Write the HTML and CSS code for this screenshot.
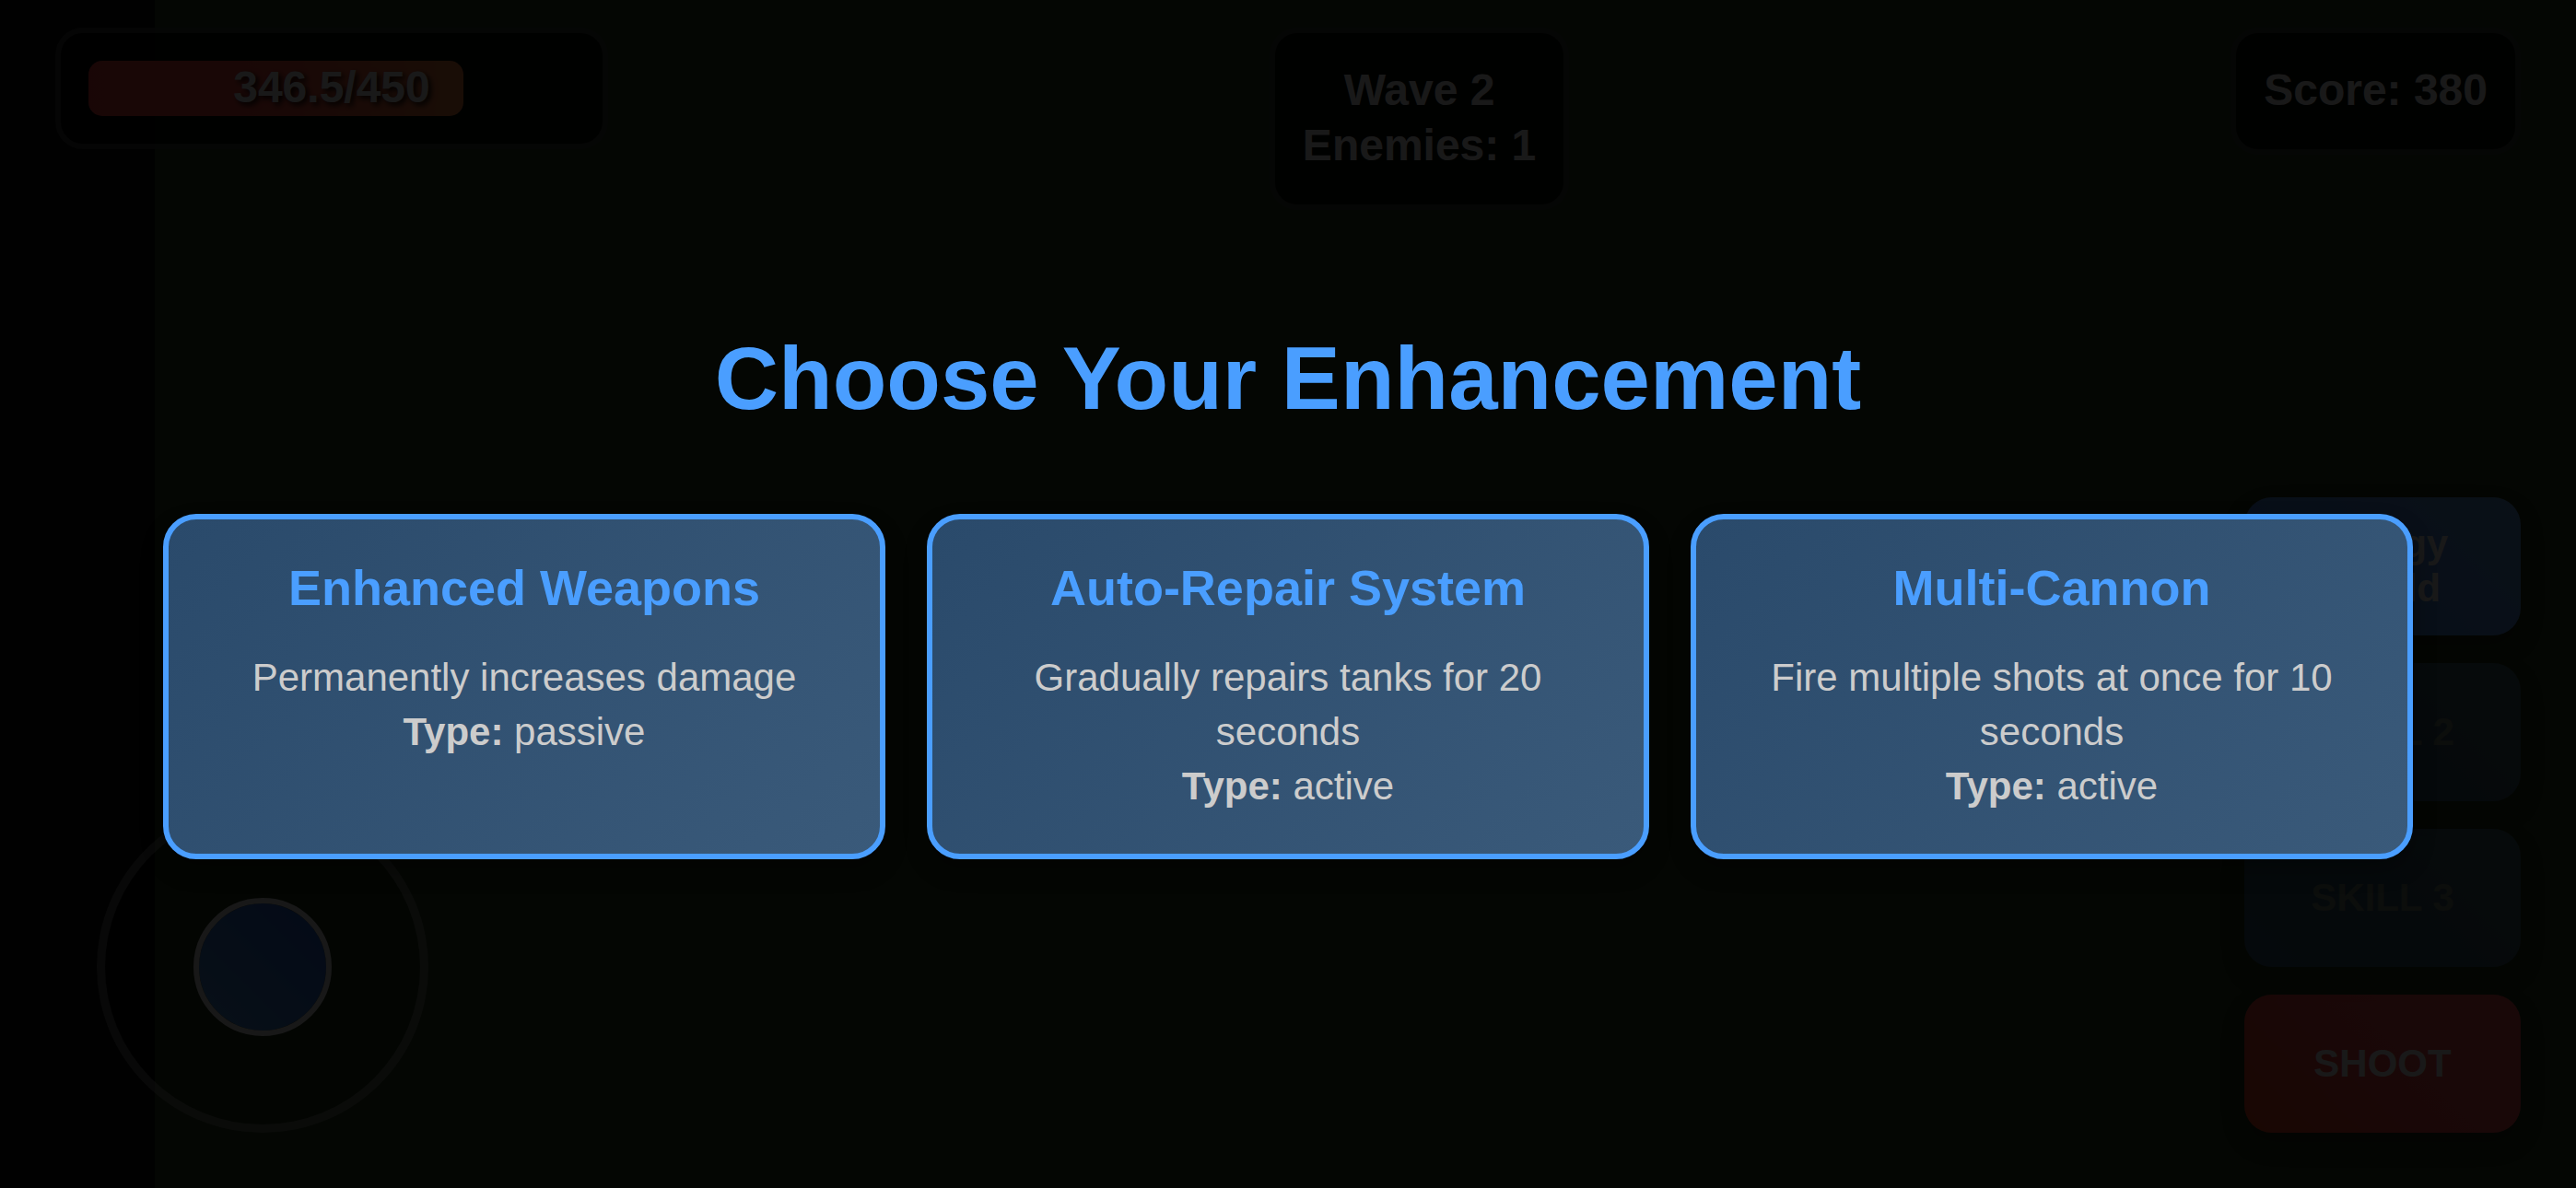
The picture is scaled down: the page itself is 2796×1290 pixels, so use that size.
FILE: index.html
```html
<!DOCTYPE html>
<html lang="en">
<head>
  <meta charset="utf-8">
  <meta name="viewport" content="width=device-width, initial-scale=1">
  <title>Choose Your Enhancement</title>
  <link rel="stylesheet" href="styles.css">
</head>
<body>
  <main class="game">
    <header class="hud">
      <div class="health">
        <div class="health-track">
          <div class="health-fill" style="width: 77%"></div>
          <span class="health-text">346.5/450</span>
        </div>
      </div>
      <div class="hud-box">
        <div>Wave 2</div>
        <div>Enemies: 1</div>
      </div>
      <div class="hud-box">Score: 380</div>
    </header>

    <div class="controls">
      <div class="joystick">
        <div class="joystick-knob"></div>
      </div>
      <div class="actions">
        <button class="action skill" type="button">Energy Shield</button>
        <button class="action skill" type="button" disabled>SKILL 2</button>
        <button class="action skill" type="button" disabled>SKILL 3</button>
        <button class="action shoot" type="button">SHOOT</button>
      </div>
    </div>

    <section class="overlay">
      <h1 class="overlay-title">Choose Your Enhancement</h1>
      <div class="cards">
        <button class="card" type="button">
          <span class="card-title">Enhanced Weapons</span>
          <span class="card-text">Permanently increases damage</span>
          <span class="card-text"><strong>Type:</strong> passive</span>
        </button>
        <button class="card" type="button">
          <span class="card-title">Auto-Repair System</span>
          <span class="card-text">Gradually repairs tanks for 20 seconds</span>
          <span class="card-text"><strong>Type:</strong> active</span>
        </button>
        <button class="card" type="button">
          <span class="card-title">Multi-Cannon</span>
          <span class="card-text">Fire multiple shots at once for 10 seconds</span>
          <span class="card-text"><strong>Type:</strong> active</span>
        </button>
      </div>
    </section>
  </main>
</body>
</html>
```
FILE: styles.css
```css
* {
  box-sizing: border-box;
}

body {
  margin: 0;
  background: #0a0a0a;
  color: #fff;
  font-family: "Liberation Sans", Arial, sans-serif;
}

button {
  margin: 0;
  font-family: inherit;
  color: inherit;
  cursor: pointer;
}

.game {
  position: relative;
  display: flex;
  flex-direction: column;
  justify-content: space-between;
  min-height: 100vh;
  background: linear-gradient(90deg, #0a0a0a 168px, #283c1e 168px);
}

/* Status bar */

.hud {
  display: flex;
  justify-content: space-between;
  align-items: flex-start;
  padding: 30px 60px 0;
  font-size: 48px;
  font-weight: bold;
  line-height: 60px;
}

.health,
.hud-box {
  background: rgba(0, 0, 0, 0.8);
  border: 6px solid rgba(255, 255, 255, 0.2);
  border-radius: 30px;
}

.health {
  width: 600px;
  padding: 30px;
}

.health-track {
  display: grid;
  height: 60px;
}

.health-fill,
.health-text {
  grid-area: 1 / 1;
}

.health-fill {
  border-radius: 15px;
  background: linear-gradient(90deg, #ff4444, #ff5040 50%, #ff8844);
}

.health-text {
  line-height: 58px;
  text-align: center;
  text-shadow: 3px 3px 6px #000;
}

.hud-box {
  padding: 32px 30px 34px;
  text-align: center;
}

/* Touch controls */

.controls {
  display: flex;
  justify-content: space-between;
  align-items: flex-end;
  padding: 0 60px 60px 105px;
}

.joystick {
  display: grid;
  place-items: center;
  width: 360px;
  height: 360px;
  border: 9px solid rgba(255, 255, 255, 0.3);
  border-radius: 50%;
  background: rgba(0, 0, 0, 0.1);
  background-clip: padding-box;
}

.joystick-knob {
  width: 150px;
  height: 150px;
  border: 6px solid #eee;
  border-radius: 50%;
  background: linear-gradient(45deg, #4e9eee, #2a66e6);
  background-clip: padding-box;
}

.actions {
  display: flex;
  flex-direction: column;
  gap: 30px;
}

.action {
  width: 300px;
  height: 150px;
  padding: 0 60px;
  border: 0;
  border-radius: 30px;
  font-size: 42px;
  font-weight: bold;
  line-height: 48px;
  box-shadow: 0 12px 24px rgba(0, 0, 0, 0.3);
}

.skill {
  background: linear-gradient(45deg, #4a8aff, #64a5e6);
}

.skill:disabled {
  color: #fff;
  opacity: 0.4;
}

.shoot {
  background: linear-gradient(45deg, #ff4422, #ff4e4e 50%, #ff5555);
}

/* Enhancement picker */

.overlay {
  position: absolute;
  inset: 0;
  display: flex;
  flex-direction: column;
  justify-content: center;
  gap: 94px;
  padding: 0 177px;
  background: rgba(0, 0, 0, 0.9);
}

.overlay-title {
  margin: 0;
  color: #4a9eff;
  font-size: 96px;
  line-height: 106px;
  text-align: center;
}

.cards {
  display: grid;
  grid-template-columns: repeat(3, 1fr);
  gap: 45px;
}

.card {
  display: flex;
  flex-direction: column;
  align-items: center;
  padding: 45px 45px 44px;
  border: 6px solid #4a9eff;
  border-radius: 36px;
  background: linear-gradient(135deg, #2a4a6b, #3a5a7a);
  box-shadow: 0 12px 24px rgba(0, 0, 0, 0.3);
  color: #ccc;
  font-size: 42px;
  line-height: 59px;
  text-align: center;
}

.card-title {
  margin-bottom: 39px;
  color: #4a9eff;
  font-size: 54px;
  font-weight: bold;
  line-height: 58px;
}
```
